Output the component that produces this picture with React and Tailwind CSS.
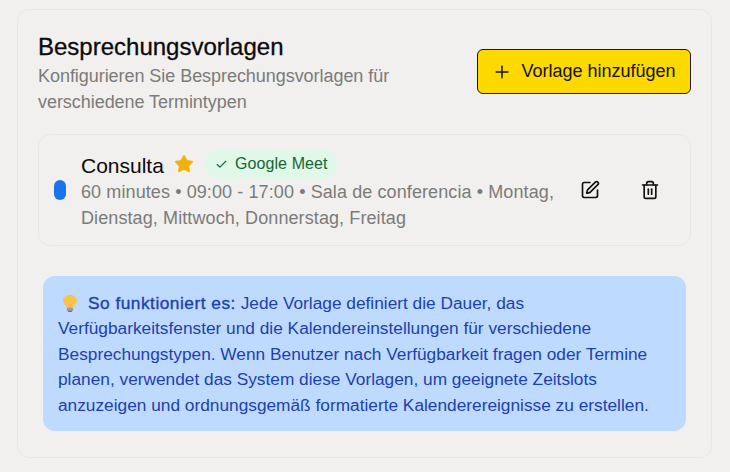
import { Plus, Check, Star, SquarePen, Trash2 } from "lucide-react";

function Bulb() {
  return (
    <svg width="14" height="17" viewBox="3 1 11 16.200" preserveAspectRatio="none" className="inline-block align-[-3px] ml-[5px] mr-[11px]">
      <path d="M8.5 1C5.2 1 3 3.4 3 6.2c0 2.3 1.6 3.4 2.3 5.2.2.5.3.9.3 1.6h5.8c0-.7.1-1.1.3-1.6C12.4 9.6 14 8.500 14 6.200 14 3.400 11.800 1 8.500 1z" fill="#fbc34a" />
      <rect x="6" y="13" width="5" height="3.500" rx="1" fill="#a39a9a" />
      <rect x="7" y="16" width="3" height="1.200" fill="#7d6f73" />
    </svg>
  );
}

export default function App() {
  return (
    <div className="w-[730px] h-[472px] bg-[#f1f0ee] pt-[9px] pl-[17px] overflow-hidden font-['Liberation_Sans',sans-serif]">
      <div className="w-[695px] h-[449px] rounded-[12px] border border-[#e8e7e5] px-[20px] pt-[19px]">
        <div className="flex justify-between items-start">
          <div className="w-[400px]">
            <h2 className="text-[24px] leading-[36px] font-normal text-[#0b0b0b] [-webkit-text-stroke:0.3px_#0b0b0b]">Besprechungsvorlagen</h2>
            <p className="text-[18px] leading-[26px] text-[#7b7b79] -mt-[2px] tracking-[-0.05px]">
              Konfigurieren Sie Besprechungsvorlagen für verschiedene Termintypen
            </p>
          </div>
          <button className="mt-[20px] w-[214px] h-[45px] rounded-[6px] border border-[#1c1a05] bg-[#fdd900] flex items-center justify-center gap-[9px] text-[18px] text-[#111]">
            <Plus size={20} strokeWidth={1.8} />
            <span>Vorlage hinzufügen</span>
          </button>
        </div>

        <div className="mt-[19px] h-[112px] rounded-[12px] border border-[#e8e7e5] flex items-center pl-[15px]">
          <div className="w-[12px] h-[20px] rounded-full bg-[#1a73ee] shrink-0" />
          <div className="ml-[15px] w-[480px] shrink-0">
            <div className="flex items-center h-[30px]">
              <span className="text-[21px] text-[#0b0b0b] pt-[4px]">Consulta</span>
              <Star size={20} className="ml-[10px] text-[#efb207]" fill="#efb207" strokeWidth={1.500} />
              <span className="ml-[10px] h-[30px] rounded-full bg-[#e0f8e7] text-[#166534] text-[16px] pl-[11px] pr-[9px] flex items-center gap-[7px] tracking-[0.1px]">
                <Check size={13} strokeWidth={2} />
                Google Meet
              </span>
            </div>
            <p className="text-[18px] leading-[26px] text-[#7b7b79] tracking-[0.1px]">
              60 minutes • 09:00 - 17:00 • Sala de conferencia • Montag, Dienstag, Mittwoch, Donnerstag, Freitag
            </p>
          </div>
          <div className="flex items-center ml-[19px] gap-[40px] text-[#111]">
            <SquarePen size={20} strokeWidth={2} />
            <Trash2 size={20} strokeWidth={2} />
          </div>
        </div>

        <div className="mt-[30px] ml-[5px] w-[643px] h-[155px] rounded-[12px] bg-[#bedbff] px-[15px] pt-[15px] text-[17.300px] leading-[25.400px] text-[#1e40af]">
          <Bulb />
          <span className="[-webkit-text-stroke:0.35px_#1e40af] tracking-[0.5px]">So funktioniert es:</span> Jede Vorlage definiert die Dauer, das Verfügbarkeitsfenster und die Kalendereinstellungen für verschiedene Besprechungstypen. Wenn Benutzer nach Verfügbarkeit fragen oder Termine planen, verwendet das System diese Vorlagen, um geeignete Zeitslots anzuzeigen und ordnungsgemäß formatierte Kalenderereignisse zu erstellen.
        </div>
      </div>
    </div>
  );
}
